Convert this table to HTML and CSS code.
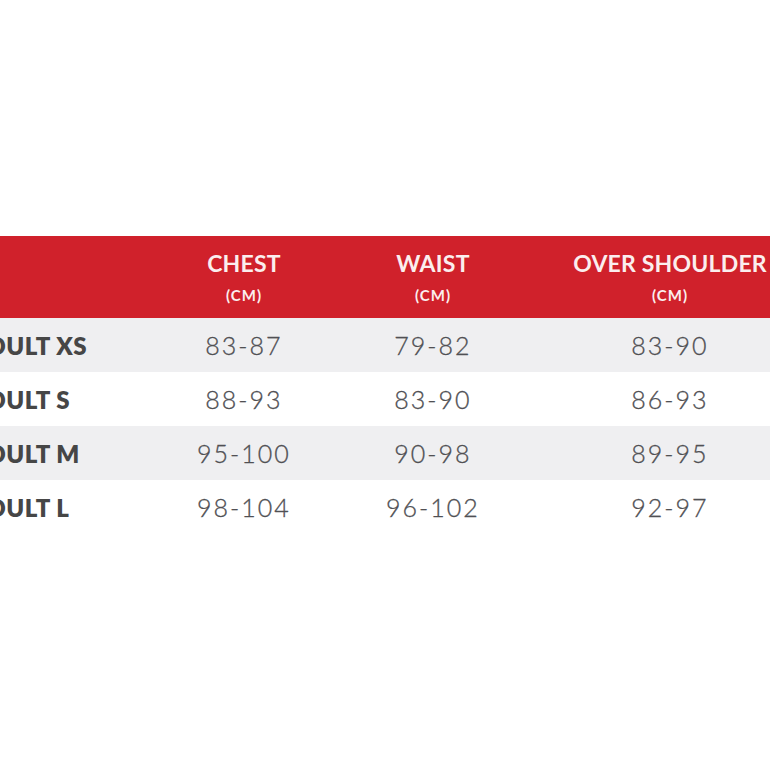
FILE: index.html
```html
<!DOCTYPE html>
<html>
<head>
<meta charset="utf-8">
<link rel="stylesheet" href="styles.css">
</head>
<body>
<div class="page">
  <div class="chart">
    <div class="row head">
      <div class="cell label"></div>
      <div class="cell"><span class="title">CHEST</span><span class="unit">(CM)</span></div>
      <div class="cell"><span class="title">WAIST</span><span class="unit">(CM)</span></div>
      <div class="cell"><span class="title">OVER SHOULDER</span><span class="unit">(CM)</span></div>
    </div>
    <div class="row shade">
      <div class="cell label">ADULT XS</div>
      <div class="cell num">83-87</div>
      <div class="cell num">79-82</div>
      <div class="cell num">83-90</div>
    </div>
    <div class="row">
      <div class="cell label">ADULT S</div>
      <div class="cell num">88-93</div>
      <div class="cell num">83-90</div>
      <div class="cell num">86-93</div>
    </div>
    <div class="row shade">
      <div class="cell label">ADULT M</div>
      <div class="cell num">95-100</div>
      <div class="cell num">90-98</div>
      <div class="cell num">89-95</div>
    </div>
    <div class="row">
      <div class="cell label">ADULT L</div>
      <div class="cell num">98-104</div>
      <div class="cell num">96-102</div>
      <div class="cell num">92-97</div>
    </div>
  </div>
</div>
</body>
</html>
```
FILE: styles.css
```css
html, body {
  margin: 0;
  padding: 0;
  background: #ffffff;
  overflow: hidden;
}
.page {
  width: 770px;
  height: 770px;
  overflow: hidden;
  padding-top: 236px;
  box-sizing: border-box;
}
.chart {
  margin-left: -30px;
  width: 842px;
  font-family: "Lato", "DejaVu Sans", sans-serif;
}
.row {
  display: grid;
  grid-template-columns: 180px 188px 190px 284px;
  height: 54px;
  align-items: center;
  background: #ffffff;
}
.row.shade {
  background: #efeff1;
}
.row.head {
  height: 82px;
  background: #d0212b;
  color: #fbeeee;
}
.cell {
  display: flex;
  flex-direction: column;
  align-items: center;
  text-align: center;
}
.title {
  font-weight: 700;
  font-size: 23px;
  letter-spacing: 0.2px;
  line-height: 24px;
  margin-top: 0;
}
.unit {
  font-weight: 700;
  font-size: 15px;
  line-height: 16px;
  letter-spacing: 1px;
  margin-top: 12px;
}
.label {
  align-items: flex-start;
  font-weight: 800;
  font-size: 24px;
  color: #464646;
  letter-spacing: 0.5px;
}
.num {
  font-weight: 300;
  font-size: 25px;
  color: #505054;
  letter-spacing: 2px;
  -webkit-text-stroke: 0.3px #505054;
}
```
